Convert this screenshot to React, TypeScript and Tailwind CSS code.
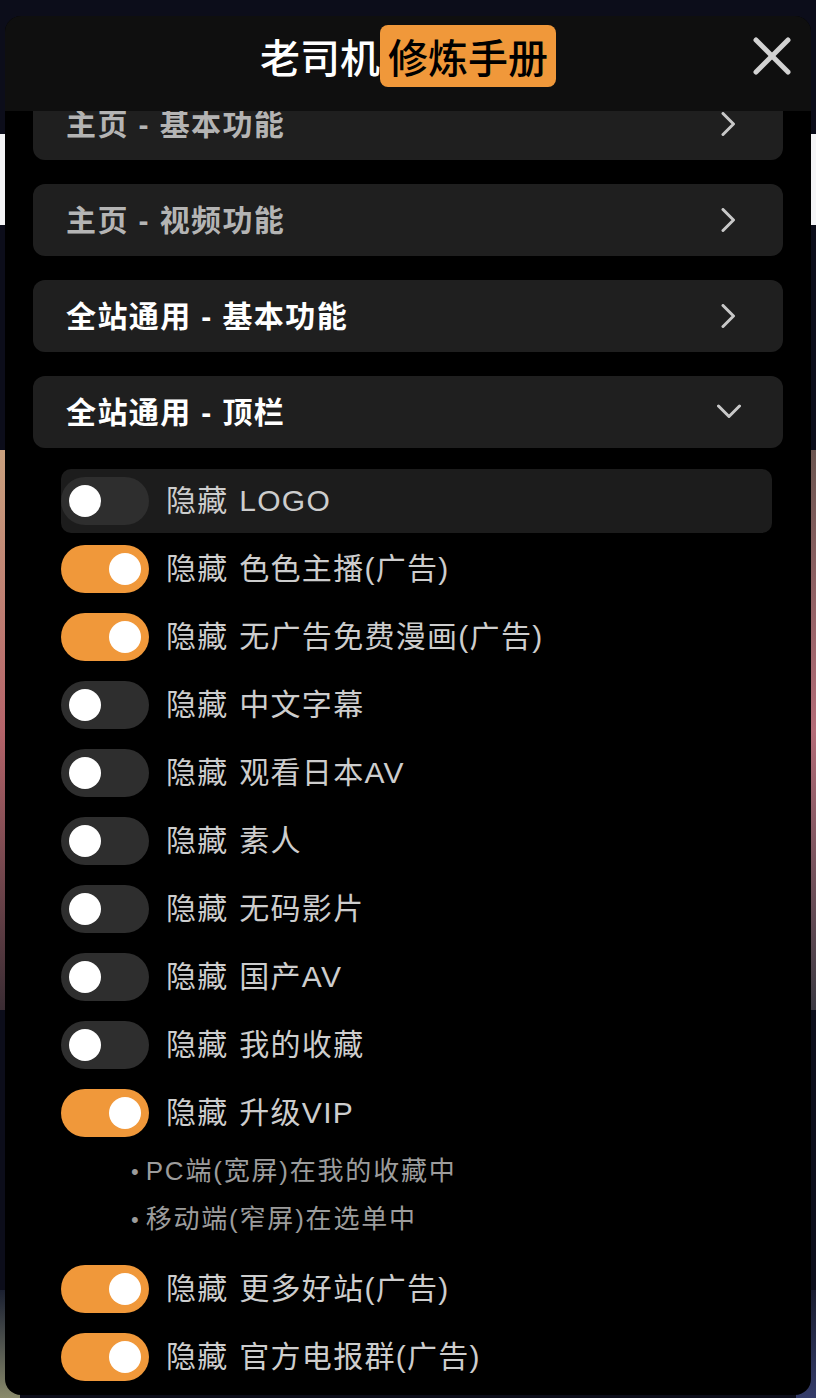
import React from "react";

interface ToggleItem {
  label: string;
  on: boolean;
  notes?: string[];
}

const sections = [
  { title: "主页 - 基本功能", dim: true, open: false },
  { title: "主页 - 视频功能", dim: true, open: false },
  { title: "全站通用 - 基本功能", dim: false, open: false },
  { title: "全站通用 - 顶栏", dim: false, open: true },
];

const toggles: ToggleItem[] = [
  { label: "隐藏 LOGO", on: false },
  { label: "隐藏 色色主播(广告)", on: true },
  { label: "隐藏 无广告免费漫画(广告)", on: true },
  { label: "隐藏 中文字幕", on: false },
  { label: "隐藏 观看日本AV", on: false },
  { label: "隐藏 素人", on: false },
  { label: "隐藏 无码影片", on: false },
  { label: "隐藏 国产AV", on: false },
  { label: "隐藏 我的收藏", on: false },
  {
    label: "隐藏 升级VIP",
    on: true,
    notes: ["PC端(宽屏)在我的收藏中", "移动端(窄屏)在选单中"],
  },
  { label: "隐藏 更多好站(广告)", on: true },
  { label: "隐藏 官方电报群(广告)", on: true },
];

function Chevron({ open }: { open: boolean }) {
  return (
    <svg width="24" height="24" viewBox="0 0 24 24" className="text-[#c8c8c8]">
      {open ? (
        <polyline points="1.5,6 12,16.5 22.5,6" fill="none" stroke="currentColor" strokeWidth="3" strokeLinecap="round" strokeLinejoin="round" />
      ) : (
        <polyline points="6,1.5 16.5,12 6,22.5" fill="none" stroke="currentColor" strokeWidth="3" strokeLinecap="round" strokeLinejoin="round" />
      )}
    </svg>
  );
}

function Switch({ on }: { on: boolean }) {
  return (
    <div
      className={
        on
          ? "flex h-[48px] w-[88px] flex-shrink-0 items-center justify-end rounded-full bg-[#f0983a] pr-[8px]"
          : "flex h-[48px] w-[88px] flex-shrink-0 items-center justify-start rounded-full bg-[#2e2e2e] pl-[8px]"
      }
    >
      <div className="h-[32px] w-[32px] rounded-full bg-white"></div>
    </div>
  );
}

export default function App() {
  return (
    <div className="relative h-[1398px] w-full overflow-hidden bg-[#0c0d1a] font-['Liberation_Sans','Noto_Sans_CJK_SC',sans-serif]">
      {/* page behind the dialog */}
      <div className="flex h-full flex-col">
        <div className="h-[134px]"></div>
        <div className="h-[91px] bg-[#f4f4f6]"></div>
        <div className="h-[225px]"></div>
        <div className="flex h-[560px] justify-between">
          <div className="w-[20px] bg-gradient-to-b from-[#c9a07e] via-[#b5646a] to-[#3a2c33]"></div>
          <div className="w-[20px] bg-gradient-to-b from-[#6b5550] via-[#b46c78] to-[#3b3942]"></div>
        </div>
        <div className="h-[280px]"></div>
        <div className="flex flex-1 justify-between">
          <div className="w-[20px] bg-gradient-to-b from-[#1b2030] to-[#8a8a6a]"></div>
          <div className="w-[20px] bg-gradient-to-b from-[#1a1d30] to-[#343c6a]"></div>
        </div>
      </div>

      {/* dialog */}
      <div className="absolute top-[16px] right-[5px] bottom-[3px] left-[5px] flex flex-col overflow-hidden rounded-[16px] bg-black">
        <div className="relative z-10 flex h-[95px] flex-shrink-0 justify-center bg-[#0f0f0f] pt-[9px]">
          <div className="flex h-[62px] items-center font-['Noto_Sans_CJK_SC',sans-serif] text-[40px] font-medium leading-none">
            <span className="text-white">老司机</span>
            <span className="flex h-[62px] items-center rounded-[8px] bg-[#f0983a] px-[8px] text-black">修炼手册</span>
          </div>
          <svg width="40" height="40" viewBox="0 0 40 40" className="absolute top-[20px] right-[19px] text-[#d2d2d2]">
            <line x1="4" y1="4" x2="36" y2="36" stroke="currentColor" strokeWidth="5" strokeLinecap="round" />
            <line x1="36" y1="4" x2="4" y2="36" stroke="currentColor" strokeWidth="5" strokeLinecap="round" />
          </svg>
        </div>

        <div className="flex-1 overflow-hidden px-[28px]">
          <div className="-mt-[23px] flex flex-col gap-[24px]">
            {sections.map((s) => (
              <div
                key={s.title}
                className="flex h-[72px] items-center justify-between rounded-[12px] bg-[#1f1f1f] pr-[42px] pl-[33px]"
              >
                <span
                  className={
                    s.dim
                      ? "text-[30px] font-bold tracking-[1.4px] text-[#b4b4b4]"
                      : "text-[30px] font-bold tracking-[1.4px] text-white"
                  }
                >
                  {s.title}
                </span>
                <Chevron open={s.open} />
              </div>
            ))}
          </div>

          <div className="mt-[21px] flex flex-col gap-[4px] pr-[11px] pl-[28px]">
            {toggles.map((t, i) => (
              <React.Fragment key={t.label}>
                <div
                  className={
                    i === 0
                      ? "flex h-[64px] items-center gap-[17px] rounded-[10px] bg-[#1c1c1c]"
                      : "flex h-[64px] items-center gap-[17px] rounded-[10px]"
                  }
                >
                  <Switch on={t.on} />
                  <span className="text-[30px] leading-none tracking-[1.3px] text-[#cdcdcd] [word-spacing:1px]">
                    {t.label}
                  </span>
                </div>
                {t.notes && (
                  <div className="flex flex-col gap-[8px] pt-[2px] pb-[14px] pl-[70px]">
                    {t.notes.map((n) => (
                      <div key={n} className="flex h-[40px] items-center gap-[7px] text-[26px] text-[#9c9c9c]">
                        <span className="text-[22px]">•</span>
                        <span className="tracking-[1.8px]">{n}</span>
                      </div>
                    ))}
                  </div>
                )}
              </React.Fragment>
            ))}
          </div>
        </div>
      </div>
    </div>
  );
}
